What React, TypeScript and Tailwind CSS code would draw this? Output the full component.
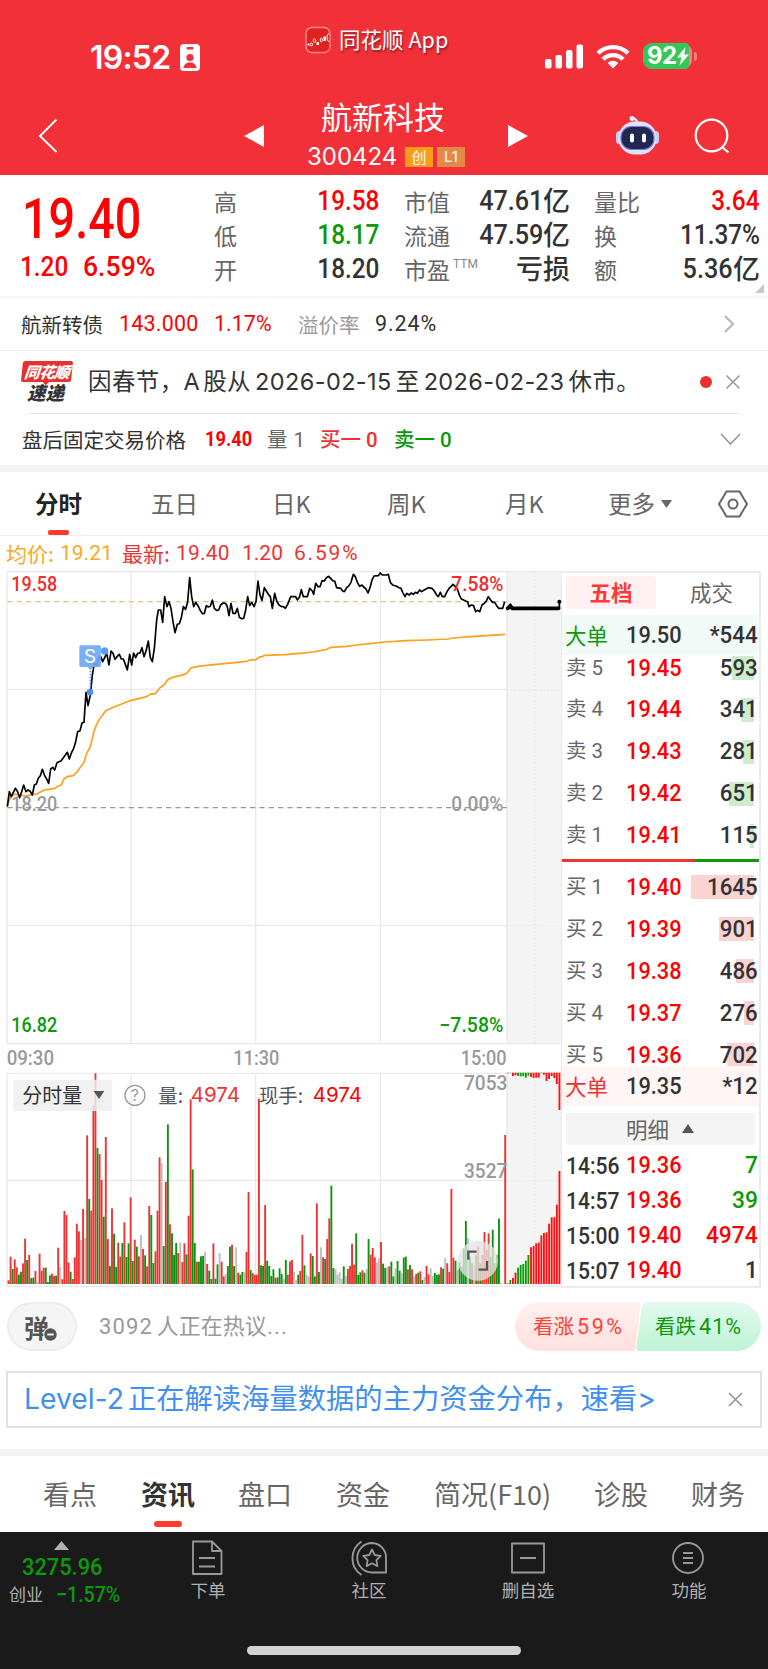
import type { ReactNode } from 'react'
import { clsx } from 'clsx'

const TONE: Record<string, string> = {
  r: '#ee3233',
  g: '#0a940c',
  n: '#bdbdbd',
}

// Chart units: three per CSS pixel, origin at the top of the price pane
const PRICE =
  '22,707 28,662 34,677 40,664 46,652 53,662 59,680 65,662 71,642 78,662 84,657 90,660 97,672 103,642 109,639 115,622 121,614 127,595 134,614 140,624 146,637 152,594 158,589 164,597 171,575 177,572 183,570 190,560 196,552 202,544 208,564 215,544 221,532 227,512 233,482 240,479 246,456 252,454 258,364 264,404 271,372 277,312 283,277 290,282 296,262 302,257 308,272 314,260 320,247 327,282 333,240 339,247 345,265 351,257 358,250 364,264 370,264 376,280 382,297 389,250 395,282 401,246 407,260 413,247 420,246 426,230 432,257 438,240 445,210 451,260 457,272 463,232 470,147 475,117 482,117 488,154 494,77 501,107 507,92 513,112 519,152 525,185 532,160 538,158 544,140 550,107 557,115 563,92 569,20 575,77 581,107 587,94 594,104 600,117 607,128 613,127 619,104 625,108 631,106 637,87 643,112 650,118 656,117 662,102 669,96 676,97 681,104 687,134 693,97 699,127 706,127 712,112 718,139 725,143 731,142 737,117 743,77 749,104 755,94 762,107 768,92 774,30 780,72 786,88 793,50 799,60 805,70 811,77 817,112 824,67 830,90 837,102 843,106 850,107 856,112 863,100 872,77 887,77 892,87 899,77 904,56 910,77 922,77 929,52 937,60 941,70 947,37 954,47 960,47 966,29 973,30 979,20 986,16 992,22 999,30 1004,30 1010,50 1022,52 1028,60 1033,62 1040,50 1047,44 1053,34 1060,10 1066,17 1072,34 1079,46 1086,42 1091,48 1098,54 1104,66 1110,50 1116,27 1122,15 1135,14 1141,6 1147,12 1160,12 1165,10 1171,34 1178,42 1190,46 1197,50 1203,52 1208,64 1215,77 1220,67 1227,72 1234,66 1240,70 1246,64 1252,67 1259,57 1265,62 1271,58 1278,54 1285,50 1296,52 1303,60 1310,72 1315,77 1321,64 1327,77 1334,77 1340,64 1347,52 1353,47 1359,40 1366,47 1372,54 1378,72 1384,84 1397,90 1403,92 1407,107 1414,102 1421,104 1427,122 1433,118 1439,122 1446,102 1453,97 1459,90 1465,77 1472,87 1478,94 1484,94 1490,104 1496,112 1508,112 1514,92'

const AVERAGE =
  '22,704 28,687 34,674 45,670 60,672 75,675 90,672 110,669 133,657 165,652 175,645 184,642 192,624 202,617 220,614 230,604 240,590 252,574 260,547 271,527 277,502 283,477 290,460 298,445 308,432 316,420 327,415 340,409 365,399 380,393 395,388 440,377 450,370 467,367 480,350 492,342 503,326 515,320 555,310 563,304 572,291 590,287 620,283 680,277 740,271 750,267 768,266 776,259 785,257 795,253 855,251 900,247 940,243 980,235 993,229 1040,226 1070,222 1110,218 1155,213 1220,209 1280,207 1345,204 1360,201 1410,197 1460,194 1516,190'

// One token per minute: colour letter, then the y of the bar top (822 is the baseline)
const VOLUME =
  'r811 r740 g777 r748 r772 g794 g785 r760 r686 g750 r735 g804 g803 r783 n815 r731 r782 r773 g773 g816 g796 r791 r798 g797 r713 n771 r808 r603 r615 r757 g785 r807 r742 r641 r664 n690 r597 n684 r376 g567 r602 r286 r190 g414 r432 r510 g620 r381 r687 g768 r595 g671 g771 r698 r740 g699 r637 g741 g700 r562 g753 r689 g710 r739 n675 r717 g736 r769 r588 g615 g759 r724 r602 r442 n460 g708 r515 g343 r643 g670 g735 g699 r729 n697 r756 r700 g733 r617 r268 g478 g699 r755 g755 g739 g738 n725 r762 g782 g807 r700 g806 g763 n729 r755 r799 n792 g768 g710 r704 g768 n712 r788 g794 g786 n787 r726 r546 g780 r789 r795 r794 r266 g766 g768 r585 g752 g768 g798 g778 r803 g802 g775 g792 n806 g750 r794 r754 r750 n786 n811 g794 r783 r675 g766 n793 n800 r730 g738 g799 r580 g786 n712 r742 g747 r687 r625 g527 g774 n778 n793 n787 n806 g769 n798 r777 r768 r701 r764 g670 g795 g787 r781 g788 n778 g687 r734 r714 r742 n757 n745 r696 g761 g774 n771 r769 g755 g799 n775 g753 g782 n790 g743 g740 r778 g765 r778 n799 r792 g788 r784 g810 n801 r768 r793 n775 n797 g789 g794 g793 r772 g776 n745 r760 r786 r537 r743 g752 n779 g757 g770 g715 g633 n684 g740 r760 n765 g735 r709 g760 r735 r666 r720 r670 g740 g659 r760 g735 g626 n819 n822 r375'
const AFTER_BUY =
  'r820 g810 r804 r788 g773 g765 g762 g752 g735 r712 r708 r700 r698 r676 r669 r667 r641 r622 r622 r584 r483'
const AFTER_SELL =
  'r190 g189 r198 r196 g198 g199 g199 g203 g197 r201 r204 r203 r203 r190 r194 r213 r207 r198 r204 r222 r300'

const parse = (s: string) => s.split(' ').map((t) => ({ tone: t[0], y: Number(t.slice(1)) }))

const ASKS = [
  { label: '卖 5', price: '19.45', vol: '593', bar: 22 },
  { label: '卖 4', price: '19.44', vol: '341', bar: 13 },
  { label: '卖 3', price: '19.43', vol: '281', bar: 11 },
  { label: '卖 2', price: '19.42', vol: '651', bar: 25 },
  { label: '卖 1', price: '19.41', vol: '115', bar: 4 },
]
const BIDS = [
  { label: '买 1', price: '19.40', vol: '1645', bar: 63 },
  { label: '买 2', price: '19.39', vol: '901', bar: 35 },
  { label: '买 3', price: '19.38', vol: '486', bar: 18 },
  { label: '买 4', price: '19.37', vol: '276', bar: 10 },
  { label: '买 5', price: '19.36', vol: '702', bar: 27 },
]
const TRADES = [
  { time: '14:56', price: '19.36', vol: '7', color: 'text-[#0a9a0a]' },
  { time: '14:57', price: '19.36', vol: '39', color: 'text-[#0a9a0a]' },
  { time: '15:00', price: '19.40', vol: '4974', color: 'text-[#ff0000]' },
  { time: '15:07', price: '19.40', vol: '1', color: 'text-[#333]' },
]

// Condensed digits, anchored to the left or the right edge
function Num({ children, className, right }: { children: ReactNode; className?: string; right?: boolean }) {
  return (
    <span
      className={clsx(
        "inline-block whitespace-nowrap font-['Roboto'] font-medium scale-x-[.87]",
        right ? 'origin-right' : 'origin-left',
        className
      )}
    >
      {children}
    </span>
  )
}

function StatusBar() {
  return (
    <div className="relative flex h-[92px] items-start text-white">
      <span className="ml-[90px] mt-[38px] w-[90px] whitespace-nowrap font-['Inter'] text-[32px] leading-[39px] font-semibold tracking-[-0.8px]">19:52</span>
      <svg className="mt-[44px]" width="20" height="27" viewBox="0 0 20 27">
        <rect width="20" height="27" rx="4" fill="#fff" />
        <rect x="6.5" y="3" width="7" height="2.4" rx="1" fill="#f13038" />
        <circle cx="10" cy="13.5" r="3.6" fill="#f13038" />
        <path d="M3.5 24c.6-4 3-5.5 6.5-5.5s5.9 1.5 6.5 5.5z" fill="#f13038" />
      </svg>
      <div className="ml-[105px] mt-[23px] flex items-center">
        <svg className="mt-[3px]" width="26" height="28" viewBox="0 0 26 28">
          <rect x="1" y="1.5" width="24" height="25" rx="6" fill="#e3211f" stroke="#f98d8d" strokeWidth="1.4" />
          <path d="M2.5 17.5h2v2h-2zM11.5 16H14v3h-2.5zM18.5 10.500H21V15h-2.5z" fill="#fff" />
          <g fill="none" stroke="#fff" strokeWidth="1">
            <ellipse cx="6.5" cy="18.5" rx="1" ry="1.5" />
            <ellipse cx="9.5" cy="14.5" rx="1.2" ry="2" />
            <ellipse cx="16.3" cy="14" rx="1.1" ry="1.8" />
            <path d="M24 7.5c-2.500 0-2.500 8 0 8" />
          </g>
        </svg>
        <span className="ml-[8px] whitespace-nowrap text-[21.5px] leading-[30px] [text-shadow:1px_2px_2px_#0006]">
          同花顺<span className="ml-[5px]">App</span>
        </span>
      </div>
      <svg className="absolute left-[545px] top-[44px]" width="86" height="25" viewBox="0 0 86 25" fill="#fff">
        <rect x="0" y="15" width="6.5" height="9.5" rx="2" />
        <rect x="10.5" y="11" width="6.5" height="13.5" rx="2" />
        <rect x="21" y="6" width="6.5" height="18.5" rx="2" />
        <rect x="31.5" y="0.5" width="6.5" height="24" rx="2" />
        <g fill="none" stroke="#fff" strokeWidth="4.3">
          <path d="M53 9.300a21.5 21.5 0 0 1 30 0" />
          <path d="M58 15.300a14 14 0 0 1 20 0" />
        </g>
        <path d="M68 24.500l-5.300-5.600a7.5 7.5 0 0 1 10.600 0z" />
      </svg>
      <div className="absolute left-[643px] top-[43px] flex h-[26px] w-[49px] items-center rounded-[9px] bg-[#f87e82]">
        <div className="flex h-full w-[46px] items-center rounded-l-[9px] rounded-r-[4px] bg-[#34c759] pl-[4px]">
          <span className="font-['Inter'] text-[24px] leading-none font-bold tracking-[-0.5px]">92</span>
        </div>
        <svg className="absolute left-[33px] top-[4px]" width="14" height="19" viewBox="0 0 14 19">
          <path d="M9.5 0L1 10.500h4.500L3.500 18.500 13 7.500H8.300z" fill="#fff" />
        </svg>
        <span className="absolute left-[51px] top-[9px] h-[9px] w-[3px] rounded-r-full bg-[#f87e82]" />
      </div>
    </div>
  )
}

function TitleBar() {
  return (
    <div className="flex h-[83px] text-white">
      <svg className="ml-[38px] mt-[26px]" width="20" height="36" viewBox="0 0 20 36" fill="none">
        <path d="M18.5 1.500L2 18l16.500 16" stroke="#fff" strokeWidth="2" />
      </svg>
      <svg className="ml-[186px] mt-[33px]" width="20" height="22" viewBox="0 0 20 22">
        <path d="M20 0v22L0 11z" fill="#fff" />
      </svg>
      <div className="ml-[43px] w-[158px]">
        <div className="mt-[4px] ml-[14px] whitespace-nowrap text-[31px] leading-[40px]">航新科技</div>
        <div className="mt-[7px] flex items-center leading-[28px]">
          <span className="w-[98px] font-['Inter'] text-[24px]">300424</span>
          <span className="flex h-[20px] w-[28px] items-center justify-center bg-[#ff9a1c] text-[15px]">创</span>
          <span className="ml-[4px] flex h-[20px] w-[28px] items-center justify-center bg-[#e48a49] font-['Inter'] text-[15px]">L1</span>
        </div>
      </div>
      <svg className="ml-[43px] mt-[33px]" width="20" height="22" viewBox="0 0 20 22">
        <path d="M0 0v22l20-11z" fill="#fff" />
      </svg>
      <svg className="ml-[88px] mt-[23px]" width="43" height="40" viewBox="0 0 43 40">
        <path d="M21 8c0-3-1-4.500-5-5" stroke="#e3e6ff" strokeWidth="2.4" fill="none" />
        <circle cx="16" cy="3.5" r="2.4" fill="#fff" />
        <rect x="0" y="16" width="7" height="13" rx="3.5" fill="#c9cdf6" />
        <rect x="36" y="16" width="7" height="13" rx="3.5" fill="#c9cdf6" />
        <rect x="2.5" y="6.5" width="38" height="33" rx="16" fill="#dfe2fb" />
        <rect x="5" y="11.500" width="33" height="23" rx="10.5" fill="#20284f" stroke="#7d78e0" strokeWidth="1.2" />
        <rect x="14" y="18.500" width="4" height="9" rx="2" fill="#fff" />
        <rect x="26" y="18.500" width="4" height="9" rx="2" fill="#fff" />
      </svg>
      <svg className="ml-[35px] mt-[26px]" width="38" height="38" viewBox="0 0 38 38" fill="none" stroke="#fff" strokeWidth="2.2">
        <circle cx="17.5" cy="17.5" r="15.8" />
        <path d="M28 29l6.500 5.500" />
      </svg>
    </div>
  )
}

function StatCol({ className, rows }: { className: string; rows: { label: ReactNode; value: ReactNode }[] }) {
  return (
    <div className={clsx('flex flex-col', className)}>
      {rows.map((r, i) => (
        <div key={i} className="flex h-[34px] items-center justify-between whitespace-nowrap">
          <span className="text-[23px] leading-none text-[#666]">{r.label}</span>
          <span className="flex items-center text-[27px] leading-none font-medium text-[#333]">{r.value}</span>
        </div>
      ))}
    </div>
  )
}

function Yi({ value }: { value: string }) {
  return (
    <>
      <Num right className="text-[28px] leading-none scale-x-[.9]!">{value}</Num>
      <span className="-mt-[4px]">亿</span>
    </>
  )
}

function Quote() {
  const n = 'text-[28px] leading-none'
  return (
    <div className="relative flex h-[123px] border-b-2 border-[#f5f5f5] pt-[9px]">
      <div className="w-[214px] pl-[22px] text-[#ff0000]">
        <Num className="block! mt-[7px] text-[55px] leading-[56px] scale-x-[.85]!">19.40</Num>
        <div className="mt-[6px] -ml-[2px] flex">
          <Num className={clsx(n, 'w-[63px]')}>1.20</Num>
          <Num className={clsx(n, 'scale-x-[.95]!')}>6.59%</Num>
        </div>
      </div>
      <StatCol
        className="w-[165px]"
        rows={[
          { label: '高', value: <Num right className={clsx(n, 'text-[#ff0000]')}>19.58</Num> },
          { label: '低', value: <Num right className={clsx(n, 'text-[#0a9a0a]')}>18.17</Num> },
          { label: '开', value: <Num right className={n}>18.20</Num> },
        ]}
      />
      <StatCol
        className="ml-[25px] w-[166px]"
        rows={[
          { label: '市值', value: <Yi value="47.61" /> },
          { label: '流通', value: <Yi value="47.59" /> },
          {
            label: <>市盈<sup className="ml-[3px] font-['Roboto'] text-[12px] text-[#888] -top-[11px]!">TTM</sup></>,
            value: <span className="-mt-[4px]">亏损</span>,
          },
        ]}
      />
      <StatCol
        className="ml-[24px] w-[166px]"
        rows={[
          { label: '量比', value: <Num right className={clsx(n, 'text-[#ff0000]')}>3.64</Num> },
          { label: '换', value: <Num right className={n}>11.37%</Num> },
          { label: '额', value: <Yi value="5.36" /> },
        ]}
      />
      <svg className="absolute right-[4px] bottom-[3px]" width="9" height="9" viewBox="0 0 9 9">
        <path d="M9 0v9H0z" fill="#c8c8c8" />
      </svg>
    </div>
  )
}

function Notices() {
  return (
    <>
      <div className="flex h-[53px] items-center border-b border-[#eee] pl-[21px] text-[20.5px] whitespace-nowrap text-[#333]">
        <span className="w-[98px]">航新转债</span>
        <span className="w-[95px] font-['Roboto'] text-[21.5px] tracking-[0.2px] text-[#ff0000]">143.000</span>
        <span className="w-[84px] font-['Roboto'] text-[21.5px] text-[#ff0000]">1.17%</span>
        <span className="w-[77px] text-[#999]">溢价率</span>
        <span className="font-['Roboto'] text-[21.5px] tracking-[0.9px]">9.24%</span>
        <svg className="ml-auto mr-[32px]" width="13" height="18" viewBox="0 0 13 18" fill="none">
          <path d="M2 1l8 8-8 8" stroke="#bbb" strokeWidth="2.4" />
        </svg>
      </div>

      <div className="flex h-[62px] items-center pl-[22px]">
        <div className="flex w-[66px] flex-col items-start italic">
          <span className="relative flex h-[21px] w-[50px] -skew-x-6 items-center justify-center rounded-[2px] bg-[#e8302f] text-[15.5px] font-black tracking-[-0.5px] text-white">
            同花顺
            <span className="absolute -bottom-[2px] left-[22px] size-[6px] rotate-45 bg-[#e8302f]" />
          </span>
          <span className="ml-[5px] text-[18.5px] leading-[21px] font-black text-[#333]">速递</span>
        </div>
        <span className="font-['Inter','Noto_Sans_CJK_SC',sans-serif] text-[23.5px] tracking-[0.4px] whitespace-nowrap text-[#333]">
          因春节，A<span className="ml-[3px]">股从</span>
          <span className="mx-[4px]">2026-02-15</span>至<span className="mx-[4px]">2026-02-23</span>休市。
        </span>
        <span className="ml-auto size-[12px] rounded-full bg-[#e8302f]" />
        <svg className="ml-[13px] mr-[27px]" width="16" height="16" viewBox="0 0 16 16">
          <path d="M1.5 1.500l13 13M14.500 1.500l-13 13" stroke="#999" strokeWidth="1.6" />
        </svg>
      </div>
      <div className="mx-[28px] h-px bg-[#e8e8e8]" />

      <div className="flex h-[51px] items-center pl-[22px] text-[20.5px] whitespace-nowrap">
        <span className="w-[183px] text-[#333]">盘后固定交易价格</span>
        <Num className="w-[62px] text-[21px] font-bold! text-[#ff0000]">19.40</Num>
        <span className="w-[53px] text-[#666]">量<span className="ml-[6px] font-['Roboto']">1</span></span>
        <span className="w-[74px] font-medium text-[#ee3233]">买一<span className="ml-[5px] font-['Roboto']">0</span></span>
        <span className="font-medium text-[#0a9a0a]">卖一<span className="ml-[5px] font-['Roboto']">0</span></span>
        <svg className="ml-auto mr-[27px]" width="21" height="13" viewBox="0 0 21 13" fill="none">
          <path d="M1 1l9.500 10L20 1" stroke="#999" strokeWidth="1.7" />
        </svg>
      </div>
      <div className="h-[7px] bg-[#f4f4f4]" />
    </>
  )
}

function PeriodTabs() {
  return (
    <div className="relative flex h-[64px] items-center border-b border-[#eee] pl-[35px] text-[23.5px] whitespace-nowrap text-[#666]">
      <span className="w-[116px] font-bold text-[#222]">分时</span>
      <span className="w-[121px]">五日</span>
      <span className="w-[115px]">日K</span>
      <span className="w-[118px]">周K</span>
      <span className="w-[103px]">月K</span>
      <span>更多</span>
      <svg className="ml-[6px]" width="11" height="8" viewBox="0 0 11 8">
        <path d="M0 0h11L5.500 8z" fill="#666" />
      </svg>
      <svg className="ml-auto mr-[20px]" width="30" height="28" viewBox="0 0 30 28" fill="none" stroke="#666" strokeWidth="2">
        <path d="M8.5 1.500h13L29 14l-7.500 12.500h-13L1 14z" />
        <circle cx="15" cy="14" r="4.5" />
      </svg>
      <span className="absolute bottom-0 left-[48px] h-[5px] w-[21px] rounded-[2px] bg-[#ff3b30]" />
    </div>
  )
}

function Legend() {
  return (
    <div className="flex h-[35px] items-center pl-[6px] text-[21px] whitespace-nowrap text-[#ee3233]">
      <span className="w-[54px] text-[#f9a825]">均价:</span>
      <span className="w-[62px] font-['Roboto'] text-[#f9a825]">19.21</span>
      <span className="w-[54px]">最新:</span>
      <span className="w-[66px] font-['Roboto'] tracking-[0.2px]">19.40</span>
      <span className="w-[52px] font-['Roboto']">1.20</span>
      <span className="font-['Roboto'] tracking-[1.8px]">6.59%</span>
    </div>
  )
}

function Chart() {
  const digits = { fontFamily: 'Roboto', fontWeight: 500, fontSize: 60 }
  return (
    <svg className="block shrink-0" width="562" height="717" viewBox="0 0 1686 2151">
      {/* after-hours strip */}
      <rect x="1521" y="2" width="162" height="1416" fill="#f4f4f4" />
      <rect x="1521" y="1506" width="162" height="640" fill="#f4f4f4" />

      <g stroke="#e9e9e9" strokeWidth="4" fill="none">
        <path d="M21 1418V2H1684M21 1418H1684M21 1507H1684M21 1507V2147H1684M1521 2V1418M1521 1507V2147" />
        <path d="M393 2V1418M767 2V1418M1141 2V1418M393 1507V2147M767 1507V2147M1141 1507V2147" />
        <path d="M21 355H1521M21 1063H1521M21 1828H1521" />
        <path d="M1605 2V1418M1605 1507V2147M1521 357H1683M1521 1063H1683M1521 1829H1683" strokeDasharray="5 6" />
        <path d="M1685 0V2151" />
      </g>

      <path d="M22 92H1521" stroke="#e2c089" strokeWidth="4" strokeDasharray="16 12" />
      <path d="M22 710H1521" stroke="#999" strokeWidth="4" strokeDasharray="16 12" />

      <polyline points={AVERAGE} fill="none" stroke="#ff9f1a" strokeWidth="5" strokeLinejoin="round" />
      <polyline points={PRICE} fill="none" stroke="#000" strokeWidth="5" strokeLinejoin="round" />
      <path d="M1523 112L1531 104L1537 112H1676" fill="none" stroke="#000" strokeWidth="11" strokeLinecap="round" />
      <path d="M1678 112V93" stroke="#000" strokeWidth="5" />
      <circle cx="1678" cy="92" r="6" />

      {/* sell marker */}
      <path d="M271 290V352" stroke="#5b9cf0" strokeWidth="5" strokeDasharray="5 4" />
      <circle cx="314" cy="240" r="11" fill="#5b9cf0" />
      <circle cx="270" cy="363" r="10" fill="#4f92e8" />
      <rect x="238" y="223" width="65" height="65" rx="5" fill="#6ea8f3" fillOpacity=".92" />
      <path d="M262 286h18l-9 10z" fill="#6ea8f3" />
      <text x="270" y="275" textAnchor="middle" fontFamily="Inter" fontSize="56" fill="#fff">S</text>

      <text {...digits} x="34" y="60" fill="#f02c2c" textLength="138" lengthAdjust="spacingAndGlyphs">19.58</text>
      <text {...digits} x="1354" y="60" fill="#f02c2c" textLength="156" lengthAdjust="spacingAndGlyphs">7.58%</text>
      <text {...digits} x="34" y="721" fill="#999" textLength="138" lengthAdjust="spacingAndGlyphs">18.20</text>
      <text {...digits} x="1354" y="721" fill="#999" textLength="156" lengthAdjust="spacingAndGlyphs">0.00%</text>
      <text {...digits} x="34" y="1382" fill="#0a9a0a" textLength="138" lengthAdjust="spacingAndGlyphs">16.82</text>
      <text {...digits} x="1318" y="1382" fill="#0a9a0a" textLength="192" lengthAdjust="spacingAndGlyphs">−7.58%</text>
      <text {...digits} x="20" y="1481" fill="#999" textLength="142" lengthAdjust="spacingAndGlyphs">09:30</text>
      <text {...digits} x="700" y="1481" fill="#999" textLength="138" lengthAdjust="spacingAndGlyphs">11:30</text>
      <text {...digits} x="1382" y="1481" fill="#999" textLength="138" lengthAdjust="spacingAndGlyphs">15:00</text>

      {/* volume pane */}
      <g transform="translate(0 1317)">
        {parse(VOLUME).map((b, i) => (
          <rect key={i} x={22.8 + i * 6.208} y={b.y} width="5.6" height={822 - b.y} fill={TONE[b.tone]} />
        ))}
        {parse(AFTER_BUY).map((b, i) => (
          <rect key={i} x={1520.5 + i * 7.75} y={b.y} width="5.6" height={822 - b.y} fill={b.tone === 'r' ? '#ff1010' : '#0aa00a'} />
        ))}
        {parse(AFTER_SELL).map((b, i) => (
          <rect key={i} x={1520.5 + i * 7.75} y="188" width="5.6" height={b.y - 188} fill={b.tone === 'r' ? '#ff1010' : '#0aa00a'} />
        ))}

        <rect x="39" y="209" width="298" height="94" rx="8" fill="#eee" fillOpacity=".85" />
        <text x="67" y="278" fontSize="60" fill="#333">分时量</text>
        <path d="M281 243h32l-16 24z" fill="#555" />
        <circle cx="405" cy="256" r="30" fill="none" stroke="#999" strokeWidth="4" />
        <text x="405" y="273" textAnchor="middle" fontFamily="Inter" fontSize="46" fill="#999">?</text>
        <text x="475" y="278" fontSize="58" fill="#555">量:</text>
        <text x="572" y="276" fontFamily="Inter" fontSize="60" fill="#ee3233" textLength="148" lengthAdjust="spacingAndGlyphs">4974</text>
        <text x="777" y="278" fontSize="58" fill="#555">现手:</text>
        <text x="938" y="276" fontFamily="Inter" fontSize="60" fill="#ff0000" textLength="148" lengthAdjust="spacingAndGlyphs">4974</text>
        <text {...digits} x="1392" y="240" fill="#999" textLength="130" lengthAdjust="spacingAndGlyphs">7053</text>
        <text {...digits} x="1392" y="504" fill="#999" textLength="130" lengthAdjust="spacingAndGlyphs">3527</text>

        <circle cx="1434" cy="752" r="60" fill="#e4e4e4" fillOpacity=".78" />
        <path d="M1405 749V725H1430M1436 779H1461V753" fill="none" stroke="#555" strokeWidth="7" />
      </g>
    </svg>
  )
}

interface LevelProps {
  label: string
  price: string
  vol: string
  bar: number
  side: 'ask' | 'bid'
}

function Level({ label, price, vol, bar, side }: LevelProps) {
  return (
    <div className="relative flex h-[41.9px] items-center pl-[4px] pr-[1px]">
      <span
        className={clsx('absolute right-[5px] top-[9px] h-[24px]', side === 'ask' ? 'bg-[#cdebcd]' : 'bg-[#fbd3d3]')}
        style={{ width: bar }}
      />
      <span className="relative w-[60px] font-['Roboto','Noto_Sans_CJK_SC',sans-serif] text-[20.5px] text-[#666]">{label}</span>
      <Num className="relative text-[24.5px] scale-x-[.89]! text-[#ff0000]">{price}</Num>
      <Num right className="relative ml-auto text-[24.5px] scale-x-[.91]! text-[#333]">{vol}</Num>
    </div>
  )
}

function BigOrder({ price, vol, className }: { price: string; vol: string; className: string }) {
  return (
    <div className={clsx('flex h-[40px] items-center pl-[3px] pr-[1px]', className)}>
      <span className="w-[61px] text-[21.5px]">大单</span>
      <Num className="text-[24.5px] scale-x-[.89]! text-[#333]">{price}</Num>
      <Num right className="ml-auto text-[24.5px] scale-x-[.91]! text-[#333]">{vol}</Num>
    </div>
  )
}

function OrderBook() {
  return (
    <div className="h-[717px] w-[199px] border-2 border-l-0 border-[#ececec]">
      <div className="flex h-[42px] items-start pt-[3px] pl-[4px] text-[21.5px]">
        <span className="flex h-[33px] w-[90px] items-center justify-center rounded-[3px] bg-[#fff1f1] font-bold text-[#f93a36]">五档</span>
        <span className="ml-[34px] flex h-[33px] items-center text-[#666]">成交</span>
      </div>
      <BigOrder price="19.50" vol="*544" className="bg-[#f1faf6] text-[#0a9a0a]" />
      <div className="-mt-[8px]">
        {ASKS.map((l) => <Level key={l.label} {...l} side="ask" />)}
      </div>
      <div className="mt-[3px] mb-[4px] flex h-[3px]">
        <span className="w-[133px] bg-[#f03434]" />
        <span className="flex-1 bg-[#0a9a0a]" />
      </div>
      {BIDS.map((l) => <Level key={l.label} {...l} side="bid" />)}
      <BigOrder price="19.35" vol="*12" className="relative -mt-[10px] bg-[#fff5f5] text-[#ee3233]" />
      <div className="mx-[4px] mt-[7px] mb-[3px] flex h-[32px] items-center bg-[#f4f4f4] pl-[60px] text-[21.5px] text-[#666]">
        明细
        <svg className="ml-[13px]" width="12" height="9" viewBox="0 0 12 9">
          <path d="M6 0l6 9H0z" fill="#555" />
        </svg>
      </div>
      {TRADES.map((t) => (
        <div key={t.time} className="flex h-[35px] items-center pl-[4px] pr-[1px] text-[24.5px] text-[#333]">
          <span className="w-[60px]"><Num className="scale-x-[.86]!">{t.time}</Num></span>
          <Num className="scale-x-[.89]! text-[#ff0000]">{t.price}</Num>
          <Num right className={clsx('ml-auto scale-x-[.93]!', t.color)}>{t.vol}</Num>
        </div>
      ))}
    </div>
  )
}

function Discussion() {
  return (
    <div className="flex h-[83px] items-center pl-[7px] pr-[7px] pb-[6px]">
      <div className="relative flex h-[49px] w-[70px] items-center rounded-full border-2 border-[#ededed] bg-[#f5f5f5] pl-[15px] text-[25px] leading-[40px] font-bold text-[#555]">
        弹
        <svg className="absolute left-[34px] top-[23px]" width="15" height="15" viewBox="0 0 14 14">
          <circle cx="7" cy="7" r="6.3" fill="#555" stroke="#f5f5f5" />
          <path d="M4 7h6" stroke="#fff" strokeWidth="1.8" />
        </svg>
      </div>
      <span className="ml-[22px] font-['Roboto','Noto_Sans_CJK_SC',sans-serif] text-[22px] whitespace-nowrap text-[#999]">
        <span className="mr-[4px] tracking-[1.1px]">3092</span>人正在热议<span className="tracking-[1.3px]">...</span>
      </span>
      <svg className="ml-auto" width="246" height="49" viewBox="0 0 246 49">
        <defs>
          <linearGradient id="up" x1="0" y1="0" x2="0" y2="1">
            <stop offset="0" stopColor="#fff1f0" />
            <stop offset="1" stopColor="#ffe0de" />
          </linearGradient>
          <linearGradient id="down" x1="0" y1="0" x2="0" y2="1">
            <stop offset="0" stopColor="#e2fbef" />
            <stop offset="1" stopColor="#bff2d5" />
          </linearGradient>
        </defs>
        <path d="M24.5 0H123q3 0 2.600 3l-5 43q-.5 3-3 3H24.500a24.500 24.500 0 0 1 0-49z" fill="url(#up)" />
        <path d="M131 0H221.500a24.500 24.500 0 0 1 0 49H124q-3 0-2.600-3L127 3q.5-3 4-3z" fill="url(#down)" />
        <text x="18" y="32" fontSize="20.5" fill="#ff4136">看涨</text>
        <text x="62" y="32" fontFamily="Roboto" fontSize="21.5" fill="#ff4136" textLength="45">59%</text>
        <text x="140" y="32" fontSize="20.5" fill="#0a9a0a">看跌</text>
        <text x="184" y="32" fontFamily="Roboto" fontSize="21.5" fill="#0a9a0a" textLength="42">41%</text>
      </svg>
    </div>
  )
}

function Banner() {
  return (
    <div className="mx-[6px] mb-[21px] flex h-[57px] items-center border-2 border-[#e2e2e2] pl-[16px] pr-[17px]">
      <span className="font-['Inter','Noto_Sans_CJK_SC',sans-serif] text-[28.3px] whitespace-nowrap text-[#4290ee]">
        <span className="mr-[4px]">Level-2</span>正在解读海量数据的主力资金分布，速看&gt;
      </span>
      <svg className="ml-auto" width="15" height="15" viewBox="0 0 15 15">
        <path d="M1 1l13 13M14 1L1 14" stroke="#999" strokeWidth="1.7" />
      </svg>
    </div>
  )
}

function InfoTabs() {
  return (
    <div className="relative flex h-[76px] items-center pl-[43px] text-[27px] whitespace-nowrap text-[#666]">
      <span className="w-[98px]">看点</span>
      <span className="w-[97px] font-bold text-[#333]">资讯</span>
      <span className="w-[98px]">盘口</span>
      <span className="w-[98px]">资金</span>
      <span className="w-[160px]">简况(F10)</span>
      <span className="w-[97px]">诊股</span>
      <span>财务</span>
      <span className="absolute bottom-[5px] left-[154px] h-[6px] w-[28px] rounded-[3px] bg-[#ff3b30]" />
    </div>
  )
}

function NavItem({ label, className, children }: { label: string; className: string; children: ReactNode }) {
  return (
    <div className={clsx('flex flex-col items-center pt-[8px] text-[17.5px] text-[#b0b0b0]', className)}>
      <svg width="36" height="36" viewBox="0 0 36 36" fill="none" stroke="#999" strokeWidth="1.8">{children}</svg>
      <span className="mt-[1px] leading-[26px] whitespace-nowrap">{label}</span>
    </div>
  )
}

function BottomNav() {
  return (
    <div className="relative flex h-[137px] bg-[#1a1a1a]">
      <div className="w-[128px] text-[#0a9a0a]">
        <svg className="mt-[9px] ml-[54px]" width="15" height="9" viewBox="0 0 15 9">
          <path d="M7.5 0L15 9H0z" fill="#b0b0b0" />
        </svg>
        <Num className="ml-[22px] mt-[2px] block! text-[24.5px] leading-[30px] scale-x-[.89]!">3275.96</Num>
        <div className="flex h-[24px] items-center pl-[9px]">
          <span className="w-[47px] text-[17px] text-[#b0b0b0]">创业</span>
          <Num className="text-[22px] scale-x-[.89]!">−1.57%</Num>
        </div>
      </div>
      <NavItem label="下单" className="ml-[38px] w-[84px]">
        <path d="M3 1.500h19L31.500 11V34H3zM22 1.500V11h9.500M9 18h16M9 26.500h16" strokeLinejoin="round" />
      </NavItem>
      <NavItem label="社区" className="ml-[77px] w-[84px]">
        <path d="M21 3a14.500 14.500 0 0 1 14 15v14.500H21A14.700 14.700 0 0 1 21 3zM10.500 1.500A20 20 0 0 0 10.500 35" />
        <path d="M21 9.500l2.700 5.500 6 .9-4.300 4.200 1 6-5.400-2.800-5.400 2.800 1-6-4.300-4.200 6-.9z" strokeLinejoin="round" />
      </NavItem>
      <NavItem label="删自选" className="ml-[75px] w-[84px]">
        <path d="M2 3.500h32v29H2zM10 18h16" strokeLinejoin="round" />
      </NavItem>
      <NavItem label="功能" className="ml-[77px] w-[84px]">
        <circle cx="17" cy="18" r="15" />
        <path d="M12 13h10M12 18h10M12 23h10" />
      </NavItem>
      <span className="absolute bottom-[14px] left-[247px] h-[9px] w-[274px] rounded-full bg-[#d2d2d2]" />
    </div>
  )
}

export default function App() {
  return (
    <div className="h-[1669px] w-[768px] overflow-hidden bg-white font-['Noto_Sans_CJK_SC','Noto_Sans',sans-serif]">
      <header className="h-[175px] bg-[#f23038]">
        <StatusBar />
        <TitleBar />
      </header>
      <Quote />
      <Notices />
      <PeriodTabs />
      <Legend />
      <div className="flex h-[717px]">
        <Chart />
        <OrderBook />
      </div>
      <Discussion />
      <Banner />
      <div className="h-[7px] bg-[#f4f4f4]" />
      <InfoTabs />
      <BottomNav />
    </div>
  )
}
